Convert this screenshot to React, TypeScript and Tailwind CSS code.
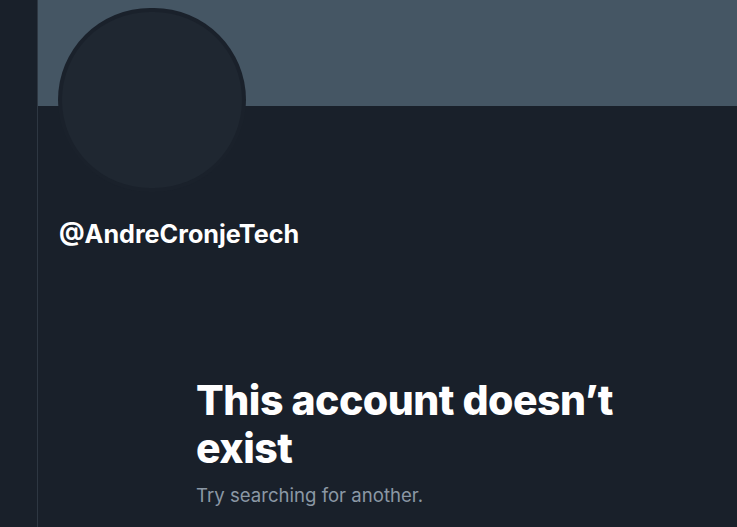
import React from "react";

export default function App() {
  return (
    <div
      className="flex w-[737px] h-[527px] overflow-hidden bg-[#19202a]"
      style={{ fontFamily: "Inter, 'Liberation Sans', sans-serif" }}
    >
      <div className="w-[38px] shrink-0 border-r border-[#2e3742] bg-[#19202a]" />
      <main className="flex-1 flex flex-col">
        <div className="h-[106px] bg-[#455664] shrink-0" />
        <div className="ml-[20px] -mt-[98px] w-[188px] h-[184px] rounded-full bg-[#1a212b] p-[4px]">
          <div className="w-full h-full rounded-full bg-[#1f2731]" />
        </div>
        <div className="ml-[21px] mt-[28px] text-[25.2px] leading-[28px] font-bold text-white">
          @AndreCronjeTech
        </div>
        <div className="ml-[158px] mt-[128px] w-[440px]">
          <h1 className="text-[41px] leading-[48px] font-extrabold text-white tracking-[-0.5px]">
            This account doesn’t exist
          </h1>
          <p className="mt-[11px] text-[18.6px] leading-[24px] text-[#8b98a5]">
            Try searching for another.
          </p>
        </div>
      </main>
    </div>
  );
}
